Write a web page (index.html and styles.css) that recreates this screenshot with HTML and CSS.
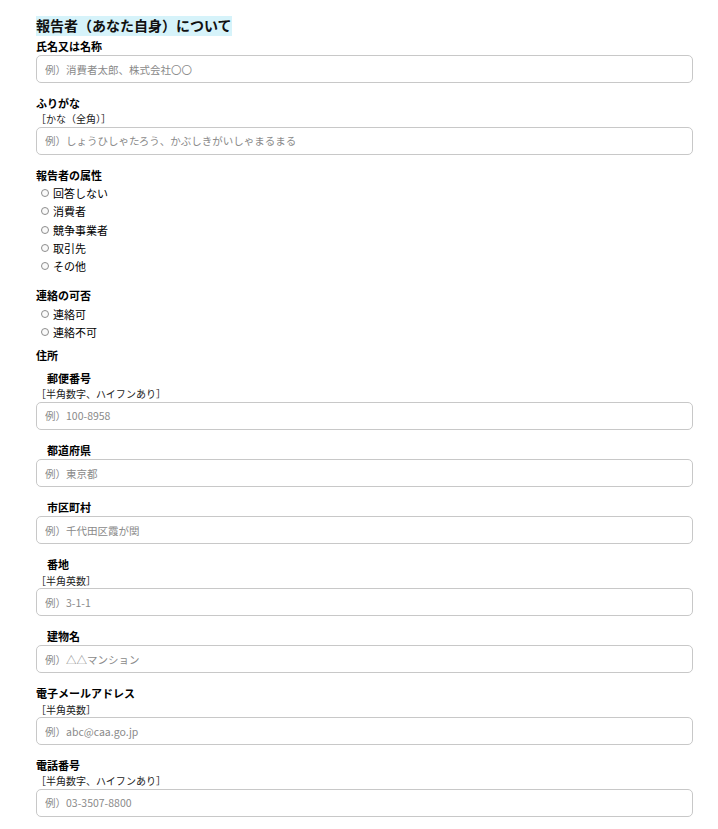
FILE: index.html
```html
<!DOCTYPE html>
<html lang="ja">
<head>
<meta charset="utf-8">
<title>報告者について</title>
<link rel="stylesheet" href="styles.css">
</head>
<body>
<div class="form">
  <div class="section-title"><span class="title-text">報告者（あなた自身）について</span></div>

  <div class="field">
    <div class="label">氏名又は名称</div>
    <input class="text" type="text" placeholder="例）消費者太郎、株式会社〇〇">
  </div>

  <div class="field">
    <div class="label">ふりがな</div>
    <div class="hint">［かな（全角）］</div>
    <input class="text" type="text" placeholder="例）しょうひしゃたろう、かぶしきがいしゃまるまる">
  </div>

  <div class="field">
    <div class="label">報告者の属性</div>
    <div class="radio"><span class="dot"></span>回答しない</div>
    <div class="radio"><span class="dot"></span>消費者</div>
    <div class="radio"><span class="dot"></span>競争事業者</div>
    <div class="radio"><span class="dot"></span>取引先</div>
    <div class="radio"><span class="dot"></span>その他</div>
  </div>

  <div class="field field-tight">
    <div class="label">連絡の可否</div>
    <div class="radio"><span class="dot"></span>連絡可</div>
    <div class="radio"><span class="dot"></span>連絡不可</div>
  </div>

  <div class="address-head label">住所</div>

  <div class="field">
    <div class="label sub">郵便番号</div>
    <div class="hint">［半角数字、ハイフンあり］</div>
    <input class="text" type="text" placeholder="例）100-8958">
  </div>

  <div class="field">
    <div class="label sub">都道府県</div>
    <input class="text" type="text" placeholder="例）東京都">
  </div>

  <div class="field">
    <div class="label sub">市区町村</div>
    <input class="text" type="text" placeholder="例）千代田区霞が関">
  </div>

  <div class="field">
    <div class="label sub">番地</div>
    <div class="hint">［半角英数］</div>
    <input class="text" type="text" placeholder="例）3-1-1">
  </div>

  <div class="field">
    <div class="label sub">建物名</div>
    <input class="text" type="text" placeholder="例）△△マンション">
  </div>

  <div class="field">
    <div class="label">電子メールアドレス</div>
    <div class="hint">［半角英数］</div>
    <input class="text" type="text" placeholder="例）abc@caa.go.jp">
  </div>

  <div class="field">
    <div class="label">電話番号</div>
    <div class="hint">［半角数字、ハイフンあり］</div>
    <input class="text" type="text" placeholder="例）03-3507-8800">
  </div>
</div>
</body>
</html>
```
FILE: styles.css
```css
html, body {
  margin: 0;
  padding: 0;
  background: #ffffff;
}
body {
  font-family: "Noto Sans CJK JP", "Noto Sans", sans-serif;
  color: #000;
}
.form {
  padding: 12px 25px 0 36px;
}
.section-title {
  height: 20px;
  margin-bottom: 5.5px;
}
.title-text {
  display: inline-block;
  background: #d6f3fa;
  font-size: 14px;
  font-weight: bold;
  line-height: 19px;
  height: 20px;
  color: #111;
}
.field {
  margin-bottom: 11.75px;
}
.field-tight {
  margin-bottom: 5.25px;
}
.label {
  font-size: 11px;
  font-weight: bold;
  line-height: 17.5px;
  height: 17.5px;
}
.label.sub {
  padding-left: 11px;
}
.address-head {
  margin-bottom: 5.75px;
}
.hint {
  font-size: 10px;
  line-height: 14.5px;
  height: 14.5px;
  color: #222;
}
.text {
  display: block;
  box-sizing: border-box;
  width: 657px;
  height: 28px;
  margin: 0;
  padding: 0 8px;
  border: 1px solid #c8c8c8;
  border-radius: 5px;
  font-family: "Noto Sans CJK JP", "Noto Sans", sans-serif;
  font-size: 10.5px;
  background: #fff;
  outline: none;
}
.text::placeholder {
  color: #8a8a8a;
}
.radio {
  display: flex;
  align-items: center;
  height: 18.3px;
  font-size: 11px;
  line-height: 18px;
  padding-left: 5px;
}
.dot {
  display: inline-block;
  box-sizing: border-box;
  width: 8px;
  height: 8px;
  border: 1px solid #8d8d8d;
  border-radius: 50%;
  background: #fafafa;
  margin-right: 4px;
}
```
